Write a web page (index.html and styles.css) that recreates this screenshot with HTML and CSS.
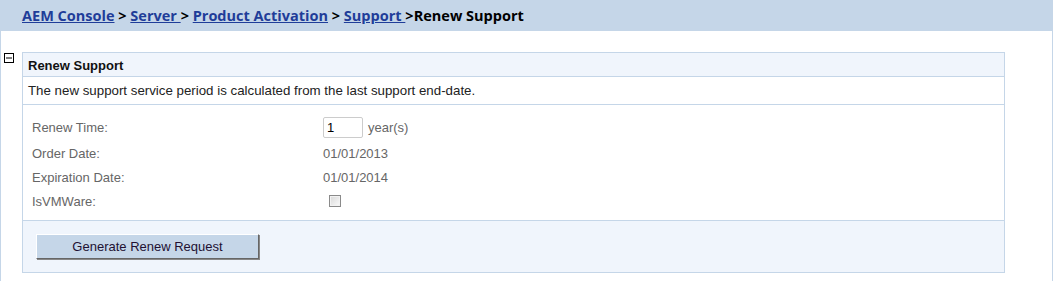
FILE: index.html
```html
<!DOCTYPE html>
<html>
<head>
<meta charset="utf-8">
<link rel="stylesheet" href="styles.css">
</head>
<body>
<div class="page">
  <div class="crumbs">
    <a href="#">AEM Console</a> &gt; <a href="#">Server </a> &gt; <a href="#">Product Activation</a> &gt; <a href="#">Support </a>&gt;<span class="current">Renew Support</span>
  </div>
  <div class="content">
    <div class="toggle"><svg width="10" height="10" viewBox="0 0 10 10"><rect x="0.5" y="0.5" width="9" height="9" fill="#fff" stroke="#000"/><line x1="2" y1="5" x2="8" y2="5" stroke="#000"/></svg></div>
    <div class="panel">
      <div class="panel-head">Renew Support</div>
      <div class="panel-desc">The new support service period is calculated from the last support end-date.</div>
      <div class="panel-form">
        <div class="row row-first"><span class="label">Renew Time:</span><span class="value"><span class="input">1</span><span class="unit">year(s)</span></span></div>
        <div class="row"><span class="label">Order Date:</span><span class="value">01/01/2013</span></div>
        <div class="row"><span class="label">Expiration Date:</span><span class="value">01/01/2014</span></div>
        <div class="row"><span class="label">IsVMWare:</span><span class="value"><span class="check"></span></span></div>
      </div>
      <div class="panel-foot">
        <button class="btn">Generate Renew Request</button>
      </div>
    </div>
  </div>
</div>
</body>
</html>
```
FILE: styles.css
```css
html, body { margin: 0; padding: 0; background: #fff; }
body { font-family: "Liberation Sans", Arial, sans-serif; font-size: 13px; color: #222; }
.page { width: 1053px; }
.crumbs {
  height: 31px;
  background: #c5d6e8;
  box-sizing: border-box;
  padding: 6px 0 0 22px;
  font-family: "Open Sans", "DejaVu Sans", sans-serif;
  font-weight: bold;
  font-size: 14.5px;
  color: #000;
  white-space: nowrap;
}
.crumbs a { color: #1f3d99; text-decoration: underline; }
.content {
  display: flex;
  align-items: flex-start;
  border-left: 1px solid #c5d6e8;
  border-right: 1px solid #c5d6e8;
  height: 250px;
  box-sizing: border-box;
  padding: 22px 0 0 3px;
}
.toggle { width: 10px; height: 10px; line-height: 0; }
.panel {
  margin-left: 8px;
  margin-top: -1px;
  width: 983px;
  box-sizing: border-box;
  border: 1px solid #c5d6e8;
}
.panel-head {
  background: #f0f5fc;
  height: 24px;
  box-sizing: border-box;
  padding: 5px 0 0 5px;
  font-weight: bold;
  color: #111;
  border-bottom: 1px solid #c5d6e8;
}
.panel-desc {
  height: 28px;
  box-sizing: border-box;
  padding: 6px 0 0 5px;
  font-size: 13.3px;
  color: #222;
  border-bottom: 1px solid #c5d6e8;
}
.panel-form {
  height: 115px;
  box-sizing: border-box;
  padding: 10px 0 0 9px;
  color: #666;
}
.row { display: flex; align-items: center; height: 24px; }
.row-first { height: 26px; align-items: baseline; padding-top: 2px; box-sizing: border-box; }
.label { width: 291px; }
.value { display: flex; align-items: center; }
.row-first .value { align-items: baseline; }
.input {
  width: 40px; height: 21px;
  box-sizing: border-box;
  border: 1px solid #ccc;
  border-radius: 2px;
  color: #000;
  padding: 2px 0 0 3px;
  line-height: 16px;
  font-size: 13px;
}
.unit { margin-left: 5px; }
.check {
  width: 12px; height: 12px;
  margin-left: 6px;
  box-sizing: border-box;
  border: 1px solid #8a8a8a;
  background: linear-gradient(135deg, #d8d8d8, #fafafa);
  box-shadow: inset 0 0 0 1px #f2f2f2;
}
.panel-foot {
  background: #f0f5fc;
  border-top: 1px solid #c5d6e8;
  height: 52px;
  box-sizing: border-box;
  padding: 13px 0 0 13px;
}
.btn {
  width: 223px; height: 25px;
  background: #c5d6e8;
  border: 1px solid;
  border-color: #fff #666 #666 #fff;
  box-shadow: 1px 1px 0 #888;
  font-family: "Liberation Sans", Arial, sans-serif;
  font-size: 13px;
  color: #221133;
  padding: 0;
}
```
